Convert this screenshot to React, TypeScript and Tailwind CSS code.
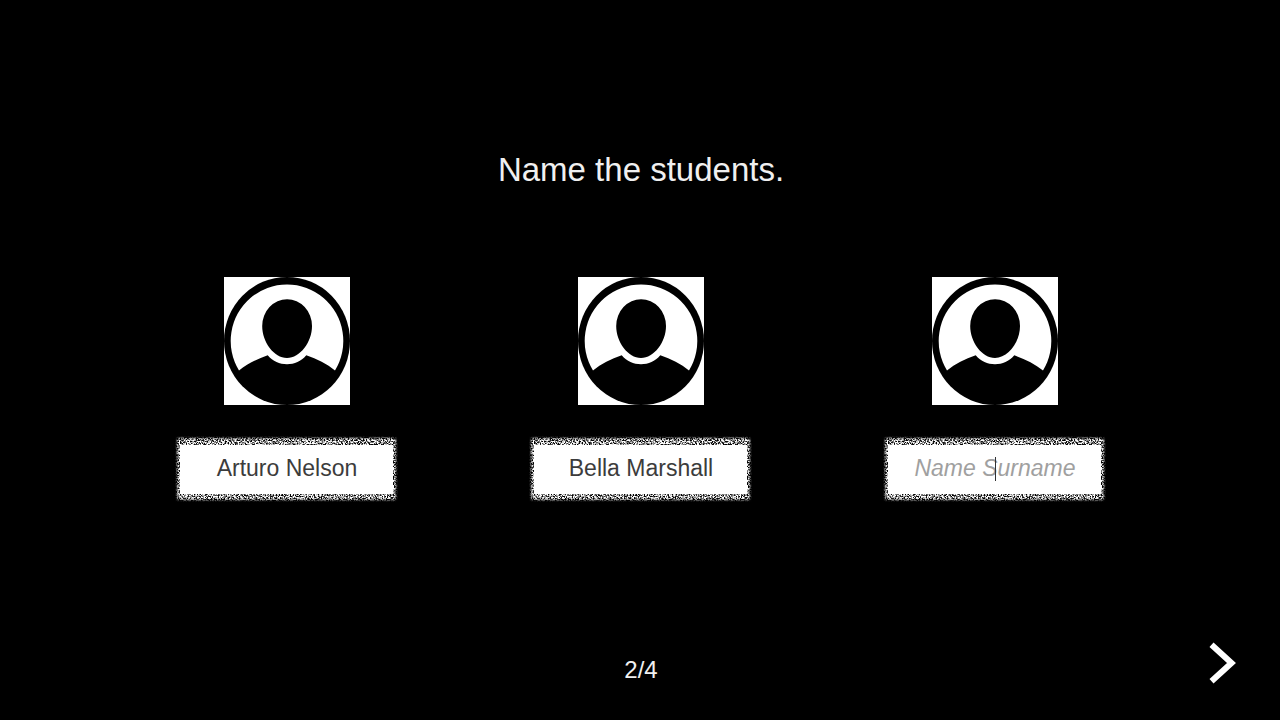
import React, { useState } from 'react';

interface Student {
  id: number;
  name: string;
}

interface StudentFieldProps {
  student: Student;
  focused: boolean;
  onChange: (name: string) => void;
}

const initialStudents: Student[] = [
  { id: 1, name: 'Arturo Nelson' },
  { id: 2, name: 'Bella Marshall' },
  { id: 3, name: '' },
];

function Avatar() {
  return (
    <svg className="w-[126px] h-32" viewBox="0 0 126 128" aria-hidden="true">
      <rect width="126" height="128" fill="white" />
      <ellipse cx="63" cy="64" rx="63" ry="64" fill="black" />
      {/* Backdrop, cut off by the shoulders and collar */}
      <path
        d="M15 93.5 A56.3 56.5 0 1 1 111 93.5 C103 87 93 82 82.3 78.3 C77 84.5 70.5 87.2 63 87.2 C55.5 87.2 49 84.5 43.7 78.3 C33 82 23 87 15 93.5 Z"
        fill="white"
      />
      {/* Head */}
      <path
        d="M38.2 49 A24.9 26.8 0 0 1 88 49 C88 65 76 81 63 81 C50 81 38.2 65 38.2 49 Z"
        fill="black"
      />
    </svg>
  );
}

// White panel whose edges dissolve into grain
function ChalkBox({ id }: { id: string }) {
  return (
    <svg className="absolute inset-0 w-full h-full" viewBox="0 0 230 72" preserveAspectRatio="none" aria-hidden="true">
      <filter id={id} x="0" y="0" width="230" height="72" filterUnits="userSpaceOnUse" colorInterpolationFilters="sRGB">
        <feTurbulence type="fractalNoise" baseFrequency="0.71" numOctaves="3" seed="7" />
        <feColorMatrix values="0 0 0 0 1  0 0 0 0 1  0 0 0 0 1  4 0 0 0 -1.4" result="grain" />
        <feGaussianBlur in="SourceGraphic" stdDeviation="0.8" result="soft" />
        <feComposite in="grain" in2="soft" operator="in" />
      </filter>
      <rect x="5" y="5" width="219" height="62" rx="2" fill="white" filter={`url(#${id})`} />
      <rect x="8" y="12" width="213" height="49" fill="white" />
    </svg>
  );
}

function StudentField({ student, focused, onChange }: StudentFieldProps) {
  return (
    <div className="flex flex-col items-center gap-7">
      <Avatar />
      <div className="relative w-[230px] h-[72px]">
        <ChalkBox id={`grain-${student.id}`} />
        <input
          type="text"
          aria-label={`Student ${student.id} name`}
          placeholder="Name Surname"
          value={student.name}
          onChange={(e) => onChange(e.target.value)}
          className="relative w-full h-full pb-0.5 bg-transparent text-center text-[23px] text-[#3c3c3c] placeholder:italic placeholder:text-[#a0a0a0] caret-transparent outline-none"
        />
        {focused && <span className="absolute left-1/2 top-6 w-px h-6 bg-[#323232]"></span>}
      </div>
    </div>
  );
}

export default function App() {
  const [students, setStudents] = useState<Student[]>(initialStudents);

  const rename = (id: number, name: string) => {
    setStudents(students.map((s) => (s.id === id ? { ...s, name } : s)));
  };

  const activeId = students.find((s) => s.name === '')?.id;

  return (
    <div className="min-h-screen flex flex-col pl-0.5 bg-black text-[#f0f0f0] font-['Liberation_Sans',sans-serif]">
      <h1 className="pt-[150px] text-center text-[33px] leading-10">Name the students.</h1>

      <main className="w-full max-w-[1062px] mx-auto mt-[87px] grid grid-cols-3">
        {students.map((student) => (
          <StudentField
            key={student.id}
            student={student}
            focused={student.id === activeId}
            onChange={(name) => rename(student.id, name)}
          />
        ))}
      </main>

      <footer className="mt-auto px-11 pb-9 grid grid-cols-[1fr_auto_1fr] items-end">
        <span className="col-start-2 text-2xl leading-7">2/4</span>
        <button type="button" aria-label="Next" className="justify-self-end">
          <svg className="w-7 h-[42px]" viewBox="0 0 28 42" fill="none" stroke="white" strokeWidth="6">
            <path d="M3.5 2.8 L23.5 21 L3.5 39.2" />
          </svg>
        </button>
      </footer>
    </div>
  );
}
